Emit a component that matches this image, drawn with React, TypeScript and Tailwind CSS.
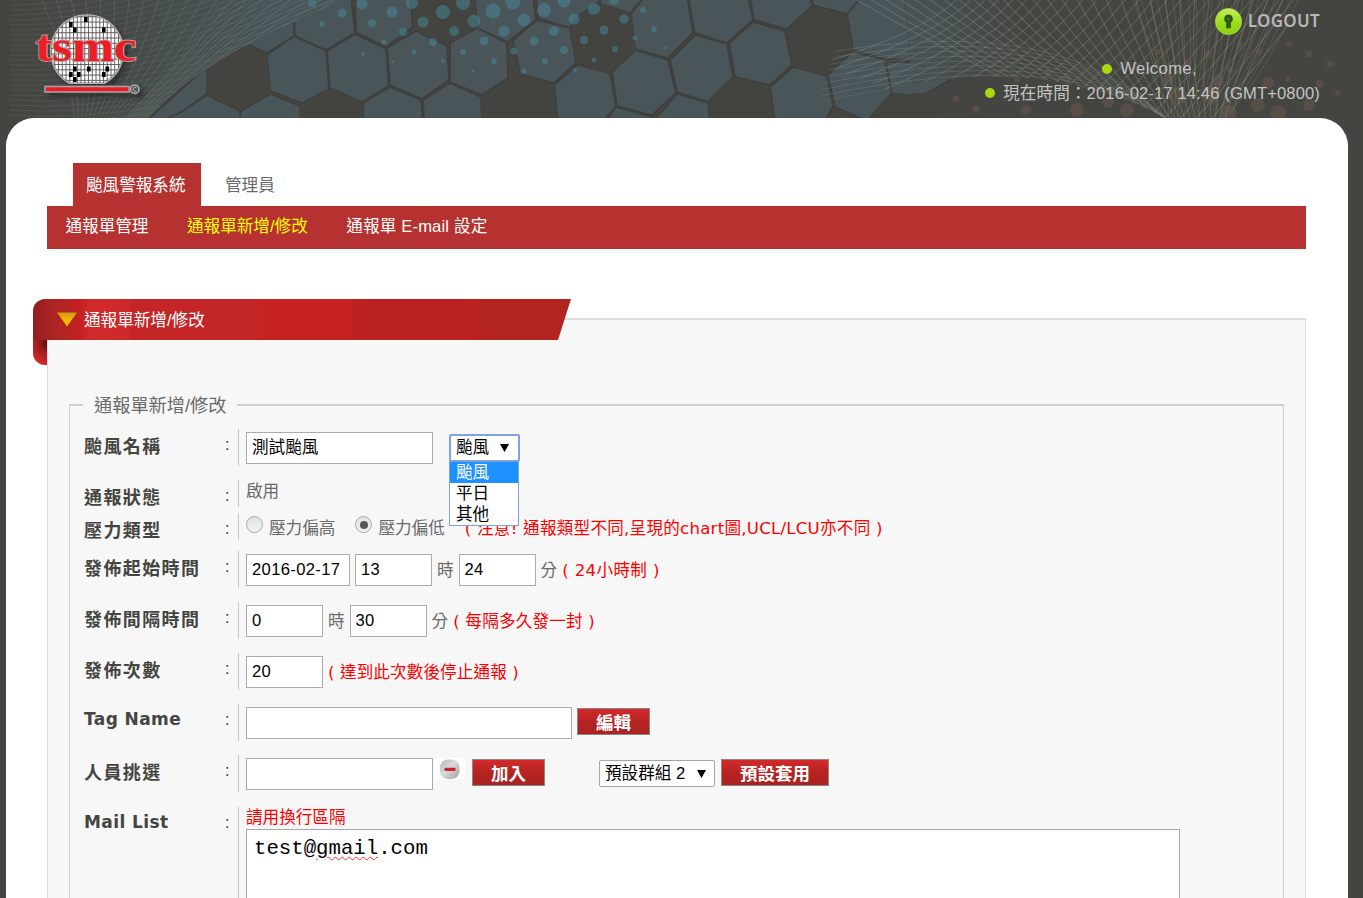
import type { ReactNode } from "react";

const SANS = "font-['Liberation_Sans','Noto_Sans_CJK_TC',sans-serif]";
const WIDE = "font-['DejaVu_Sans','Noto_Sans_CJK_TC',sans-serif]";

const LIGHT_CELLS = [
  "267,55 294,36 326,51 329,89 302,103 270,91",
  "327,51 355,34 386,49 389,86 362,102 330,88",
  "387,48 416,31 447,46 449,80 422,99 390,85",
  "293,-4 351,-4 355,33 326,50 295,36",
  "355,-4 410,-4 413,27 386,47 356,32",
  "236,39 234,-4 293,-4 294,36 267,53",
  "450,43 477,28 507,43 508,78 482,95 450,82",
  "537,20 570,28 576,63 554,83 520,74 513,40",
  "475,-4 533,-4 536,20 508,42 477,28",
  "536,-4 605,-4 597,3 580,15 570,28 538,18",
  "600,-4 645,-4 630,13 600,4",
  "645,-4 687,-4 693,33 668,58 635,49 631,14",
  "688,-4 748,-4 753,20 727,43 695,33",
  "695,35 727,44 733,77 708,102 677,92 670,60",
  "635,50 668,60 676,93 652,115 617,106 612,72",
  "577,65 610,73 616,107 603,121 558,121 554,85",
  "753,22 785,31 792,65 770,85 735,77 729,43",
  "750,-4 810,-4 812,6 787,29 754,20",
  "770,87 793,67 827,76 833,106 825,121 775,121",
  "828,75 852,52 885,60 892,93 867,121 835,107",
  "813,5 847,14 862,-4 811,-4",
  "847,15 862,-4 905,-4 911,60 885,59 853,50",
  "677,94 708,103 710,121 654,121",
  "616,107 652,117 650,121 606,121",
  "363,103 390,87 421,100 423,121 364,121",
  "423,100 450,83 481,97 482,121 424,121",
  "241,111 270,94 300,106 300,121 240,121",
  "183,111 207,95 240,111 240,121 160,121",
  "150,118 207,66 207,94 183,111 160,122",
  "892,94 886,62 935,62 950,80 925,94 905,95",
];
const DARK_CELLS = [
  "235,40 267,53 270,92 242,110 207,92 207,62",
  "300,105 330,88 361,102 363,121 300,121",
  "413,-4 475,-4 475,28 447,44 414,27",
  "597,3 630,13 635,50 610,72 576,63 571,28 580,15",
  "520,74 552,85 558,121 482,121 482,97 508,80",
  "813,7 847,15 852,50 827,74 793,65 787,30",
  "735,78 768,87 775,121 710,121 710,102",
  "867,121 892,95 930,93 940,121",
];
const TEAL_DOTS = [
  [312, 3, 4], [342, 13, 4.5], [322, 24, 3], [362, 4, 5.5], [392, 12, 5.5], [372, 23, 4], [412, 3, 6], [403, 32, 4],
  [384, 42, 2.5], [433, 42, 4], [414, 52, 2.5], [363, 54, 2], [423, 22, 5.5], [443, 12, 7], [463, 3, 7], [474, 21, 6.5],
  [454, 31, 5], [493, 11, 7.5], [513, 2, 7.5], [524, 20, 6.5], [504, 31, 5.5], [484, 41, 4.5], [463, 52, 3], [494, 61, 3],
  [544, 10, 7], [564, 1, 6.5], [574, 19, 5.5], [554, 31, 5], [534, 41, 4.5], [514, 51, 3.5], [545, 61, 3], [524, 71, 2.5],
  [564, 50, 4], [594, 9, 6], [614, 0, 5], [604, 30, 4.5], [584, 40, 4], [624, 19, 4.5], [615, 49, 3], [594, 60, 2.5],
  [643, 10, 3], [654, 29, 3], [635, 38, 2.5], [665, 48, 1.5], [575, 70, 2], [473, 71, 1.5], [443, 61, 2], [393, 62, 1.5],
];
const RUST_DOTS = [
  [976, 109, 4], [1026, 110, 5], [1077, 110, 7], [1127, 110, 7], [1108, 102, 6], [1211, 95, 9], [1258, 105, 7], [1278, 113, 8],
  [1309, 105, 6], [1268, 83, 6], [1218, 81, 6], [1169, 79, 6], [1288, 79, 3], [1309, 54, 3.5], [1289, 44, 3], [1330, 64, 3.5],
  [1208, 54, 4], [1188, 63, 4], [1230, 70, 3.5], [1158, 52, 3], [1017, 80, 3], [1067, 79, 4], [1048, 71, 3], [1178, 96, 9],
  [1229, 113, 8], [1338, 93, 3], [1320, 84, 4], [956, 99, 3], [1240, 44, 3], [1259, 52, 3],
];

const range = (n: number) => Array.from({ length: n }, (_, i) => i);

function HeaderArt() {
  return (
    <svg className="absolute inset-0" width="1363" height="118" viewBox="0 0 1363 118">
      <defs>
        <linearGradient id="tone" x1="0" x2="1">
          <stop offset="0" stopColor="#444540" />
          <stop offset="0.35" stopColor="#454a47" />
          <stop offset="0.75" stopColor="#485357" />
          <stop offset="1" stopColor="#48565a" />
        </linearGradient>
        <linearGradient id="toneRight" x1="0" x2="1">
          <stop offset="0" stopColor="#485358" />
          <stop offset="0.3" stopColor="#444540" />
        </linearGradient>
        <clipPath id="leftMesh">
          <path d="M10 0H342Q262 36 220 60Q180 84 148 118H10Z" />
        </clipPath>
        <clipPath id="rightMesh">
          <path d="M850 -2H1300Q1268 80 1225 118H1165Q1060 62 925 82L820 102Z" />
        </clipPath>
      </defs>
      {LIGHT_CELLS.map((p) => (
        <polygon key={p} points={p} fill="#4a555a" stroke="#3f403e" strokeWidth="1.8" />
      ))}
      {DARK_CELLS.map((p) => (
        <polygon key={p} points={p} fill="#434440" />
      ))}
      <g clipPath="url(#leftMesh)" fill="none">
        <rect width="345" height="118" fill="url(#tone)" />
        {range(34).map((i) => (
          <path key={i} d={`M${10} ${i * 5 - 30}Q${150} ${i * 5.5 - 34} ${360} ${i * 7 - 150}`} stroke="#8f9484" strokeOpacity="0.2" strokeWidth="0.9" />
        ))}
        {range(26).map((i) => (
          <path key={i} d={`M${40 + i * 15} -4Q${70 + i * 9} 60 ${75 + i * 3.4} 122`} stroke="#90a5a0" strokeOpacity="0.25" strokeWidth="0.9" />
        ))}
        {range(12).map((i) => (
          <path key={i} d={`M${342 - i * 8} ${-i}Q${258 - i * 6} ${34 - i} ${220 - i * 3} ${60 - i}Q${180 - i} ${82 - i} ${148 - i * 2} 118`} stroke="#93a5a0" strokeOpacity="0.22" strokeWidth="0.9" />
        ))}
      </g>
      <g clipPath="url(#rightMesh)" fill="none">
        <path d="M905 -2H1300Q1268 80 1225 118H1165Q1060 62 925 82L912 84Z" fill="url(#toneRight)" />
        {range(30).map((i) => (
          <path key={i} d={`M${850 + i * 15} -4Q${960 + i * 10} 60 ${1110 + i * 4} 130`} stroke="#aeb09a" strokeOpacity="0.26" strokeWidth="1.1" />
        ))}
        {range(26).map((i) => (
          <path key={i} d={`M${960 + i * 14} -4Q${930 + i * 12} ${30 + i * 3} ${820 + i * 13} ${64 + i * 5}`} stroke="#a3aa98" strokeOpacity="0.26" strokeWidth="1.1" />
        ))}
        {range(22).map((i) => (
          <path key={i} d={`M${1300 - i * 8} -4Q${1265 - i * 5} 75 ${1225 - i * 3} 118`} stroke="#a5a88c" strokeOpacity="0.2" strokeWidth="1" />
        ))}
        {range(9).map((i) => (
          <path key={i} d={`M820 ${102 - i * 6}Q1060 ${50 - i * 5} 1165 118`} stroke="#94a196" strokeOpacity="0.24" strokeWidth="1" />
        ))}
      </g>
      {TEAL_DOTS.map(([x, y, r]) => (
        <circle key={`${x}-${y}`} cx={x} cy={y} r={r} fill="#46899a" fillOpacity="0.5" />
      ))}
      {RUST_DOTS.map(([x, y, r]) => (
        <circle key={`${x}-${y}`} cx={x} cy={y} r={r} fill="#85685a" fillOpacity="0.28" />
      ))}
    </svg>
  );
}

const DIES = [
  [84, 17], [69, 22], [73, 27.5], [102, 27.5], [87, 66.5], [73, 66.5], [69, 72], [77, 72], [73, 77], [105.5, 66.5], [102, 72],
];

function Logo() {
  return (
    <svg className="absolute left-[30px] top-[6px]" width="120" height="96" viewBox="30 6 120 96">
      <defs>
        <clipPath id="wafer">
          <path d="M70 83A36 36 0 1 1 104 83Z" />
        </clipPath>
        <filter id="soft" x="-20%" y="-20%" width="150%" height="150%">
          <feDropShadow dx="4" dy="4" stdDeviation="2.5" floodColor="#222" floodOpacity="0.6" />
        </filter>
      </defs>
      <g filter="url(#soft)">
        <path d="M70 83A36 36 0 1 1 104 83Z" fill="#fff" stroke="#b5b5b5" strokeWidth="2" />
        <rect x="45" y="86.5" width="84" height="5.5" fill="#ed1c24" stroke="#a5a5a5" strokeWidth="1.5" />
        <circle cx="134.7" cy="89.3" r="4.2" fill="#555" stroke="#a8a8a8" strokeWidth="1.6" />
        <path d="M136.3 87.6A2 2 0 1 0 136.3 91" fill="none" stroke="#bbb" strokeWidth="0.9" />
      </g>
      <g clipPath="url(#wafer)">
        {range(20).map((i) => (
          <path key={i} d={`M${51 + i * 3.75} 10V88`} stroke="#5a5456" strokeWidth="0.9" />
        ))}
        {range(15).map((i) => (
          <path key={i} d={`M48 ${11.5 + i * 5.3}H126`} stroke="#5a5556" strokeWidth="0.9" />
        ))}
        {DIES.map(([x, y]) => (
          <rect key={`${x}-${y}`} x={x} y={y} width="3.6" height="5" fill="#000" />
        ))}
      </g>
      <text
        x="35.5"
        y="61"
        textLength="101"
        lengthAdjust="spacingAndGlyphs"
        fontSize="44"
        fontWeight="700"
        className="font-['Liberation_Serif',serif]"
        fill="#ee1c25"
        stroke="#b09c9c"
        strokeWidth="1.8"
        paintOrder="stroke"
      >
        tsmc
      </text>
    </svg>
  );
}

function Header() {
  return (
    <header className="relative flex h-[118px] flex-col items-end pr-[43px]">
      <HeaderArt />
      <Logo />
      <a className="relative mt-2 flex h-[27px] items-center gap-[6px]">
        <svg width="27" height="27" viewBox="0 0 27 27">
          <defs>
            <linearGradient id="lime" x1="0" y1="0" x2="0" y2="1">
              <stop offset="0" stopColor="#c6f05a" />
              <stop offset="0.55" stopColor="#9bdc1c" />
              <stop offset="1" stopColor="#8ccf12" />
            </linearGradient>
          </defs>
          <circle cx="13.5" cy="13.5" r="13.1" fill="url(#lime)" stroke="#b9ee45" strokeWidth="0.6" />
          <path d="M13.5 6.6a4.3 4.3 0 0 0-2.2 8l-.3 5.7h5l-.3-5.7a4.3 4.3 0 0 0-2.2-8z" fill="#2f5a10" />
          <circle cx="13.5" cy="11" r="1.1" fill="#5f8f25" />
        </svg>
        <span className="-mt-[2px] font-['Noto_Sans',sans-serif] text-[17px] font-semibold leading-none tracking-[0.3px] text-[#b9b7bb]">LOGOUT</span>
      </a>
      <div className={`relative mt-[22px] mr-[123px] flex h-[25px] items-center gap-[8px] text-[16.6px] text-[#c3c3c3] ${SANS}`}>
        <i className="-mt-[2px] size-[10px] rounded-full bg-[#a9d811]" />
        <span className="tracking-[0.4px]">Welcome,</span>
      </div>
      <div className={`relative flex h-[25px] items-center gap-[8px] text-[16.6px] text-[#c3c3c3] ${SANS}`}>
        <i className="-mt-[3px] size-[10px] rounded-full bg-[#a9d811]" />
        <span className="whitespace-nowrap tracking-[0.12px]">現在時間：2016-02-17 14:46 (GMT+0800)</span>
      </div>
    </header>
  );
}

function Row({ label, latin, className, children }: { label: string; latin?: boolean; className: string; children: ReactNode }) {
  return (
    <div className={`flex ${className}`}>
      {latin ? (
        <div className="w-[139px] whitespace-nowrap font-['DejaVu_Sans',sans-serif] text-[17px] font-bold leading-[31px] tracking-[0.4px] text-[#444540]">
          {label}
        </div>
      ) : (
        <div className="w-[139px] whitespace-nowrap font-['Noto_Sans_CJK_TC',sans-serif] text-[18px] font-bold leading-[33px] tracking-[1.4px] text-[#444540]">
          {label}
        </div>
      )}
      <div className="w-[15px] pl-[2px] text-[16px] leading-[32px] text-[#333]">:</div>
      <div className="flex flex-1 items-start border-l border-[#c9c9c9] pl-[7px]">{children}</div>
    </div>
  );
}

function Field({ value, className }: { value?: string; className: string }) {
  return (
    <div className={`mt-[3px] flex h-8 items-center border-[1.5px] border-[#ababab] bg-white pl-[5px] pt-px text-[16.6px] text-black ${className}`}>
      {value}
    </div>
  );
}

function Unit({ children }: { children: ReactNode }) {
  return <span className="mx-[5px] mt-[3px] leading-[34px]">{children}</span>;
}

function Note({ children, className = "" }: { children: ReactNode; className?: string }) {
  return <span className={`whitespace-pre text-[16.6px] text-[#fe0000] ${WIDE} ${className}`}>{children}</span>;
}

function RedButton({ children, className }: { children: ReactNode; className: string }) {
  return (
    <button
      className={`mt-[4px] flex h-[27px] items-center justify-center border-[1.5px] border-[#8f8686] bg-linear-to-b from-[#d22b2b] via-[#b52322] to-[#a92322] pt-[3px] text-[17.5px] font-bold text-white ${className}`}
    >
      {children}
    </button>
  );
}

function Caret() {
  return (
    <svg className="-mt-[2px]" width="9" height="8" viewBox="0 0 9 8">
      <path d="M0 0H9L4.5 8Z" fill="#000" />
    </svg>
  );
}

function Radio({ checked }: { checked?: boolean }) {
  return (
    <span className="mt-[3px] mr-[6px] flex size-[17px] items-center justify-center rounded-full border border-[#aaa] bg-linear-to-b from-[#e2e2e2] to-[#f1f1f1]">
      {checked && <i className="size-[8px] rounded-full bg-[#555]" />}
    </span>
  );
}

function KindSelect() {
  return (
    <div className="relative ml-[16px] mt-[5px] text-[16.6px] text-black">
      <div className="flex h-[28px] w-[71px] items-center justify-between rounded-[2px] border-2 border-[#7ea1e8] bg-white pl-[5px] pr-[9px] pt-px">
        颱風
        <Caret />
      </div>
      <div className="absolute left-0 top-[27px] z-10 w-[70px] border border-[#7fa3c9] bg-white">
        <div className="h-[21px] bg-[#1e90ff] pl-[6px] leading-[22px] text-white">颱風</div>
        <div className="h-[21px] pl-[6px] leading-[21px]">平日</div>
        <div className="h-[21px] pl-[6px] leading-[21px]">其他</div>
      </div>
    </div>
  );
}

function MinusIcon() {
  return (
    <span className="ml-[1px] mt-[3px] flex h-[22px] w-[31px] items-start justify-center bg-white">
      <svg width="22" height="22" viewBox="0 0 22 22">
        <defs>
          <linearGradient id="steel" x1="0" y1="0" x2="1" y2="1">
            <stop offset="0" stopColor="#b2b2b2" />
            <stop offset="0.45" stopColor="#dcdcdc" />
            <stop offset="1" stopColor="#9f9f9f" />
          </linearGradient>
        </defs>
        <rect x="1" y="1.5" width="19.5" height="19.5" rx="8" fill="url(#steel)" />
        <rect x="5.5" y="9.8" width="11" height="3.2" rx="0.8" fill="#c9232c" />
      </svg>
    </span>
  );
}

export default function App() {
  return (
    <div className={`h-[898px] w-[1363px] overflow-hidden bg-[#444540] text-[16.6px] text-[#6a6a6a] ${SANS}`}>
      <Header />
      <main className="ml-[6px] h-[780px] w-[1342px] rounded-t-[28px] bg-white pl-[41px] pr-[42px] pt-[45px]">
        <div className="ml-[26px] flex h-[43px] leading-[45px]">
          <div className="w-[128px] whitespace-nowrap bg-[#b53230] pl-[13px] text-white">颱風警報系統</div>
          <div className="pl-[24px]">管理員</div>
        </div>
        <nav className="flex h-[43px] gap-[38.5px] whitespace-nowrap bg-[#b53230] pl-[18.5px] leading-[42px] text-white">
          <span>通報單管理</span>
          <span className="text-[#ffff00]">通報單新增/修改</span>
          <span className="tracking-[0.15px]">通報單 E-mail 設定</span>
        </nav>

        <section className="mt-[50px]">
          <div className="relative z-10 -ml-[14px] h-[41px] w-[538px]">
            <div className="absolute left-0 top-[30px] h-[36px] w-[14px] rounded-bl-[12px] bg-[radial-gradient(circle_at_100%_14px,#6e1010_2px,#9e1d1d_9px,#d02828_20px)]" />
            <div className="relative flex h-[41px] items-center gap-[7px] rounded-tl-[12px] bg-[linear-gradient(90deg,#961e1f_0px,#b02424_24px,#b52421_37px,#c42020_46px,#d02a2a_58px,#cd2829_97px,#c42628_98px,#c42628_229px,#c62320_230px,#c62320_319px,#bb2120_320px,#bb2120_446px,#b32420_447px)] pl-[24px] text-white [clip-path:polygon(0_0,100%_0,525px_100%,0_100%)]">
              <svg width="20" height="15" viewBox="0 0 20 15">
                <defs>
                  <linearGradient id="gold" x1="0" y1="0" x2="0" y2="1">
                    <stop offset="0" stopColor="#c79c10" />
                    <stop offset="0.6" stopColor="#ffb800" />
                  </linearGradient>
                </defs>
                <path d="M0 0.5H20L10 14.5Z" fill="url(#gold)" />
              </svg>
              <span className="pt-[4px]">通報單新增/修改</span>
            </div>
          </div>

          <div className="-mt-[22px] h-[640px] border border-t-2 border-[#dcdcdc] bg-[#f7f7f7] pl-[21px] pr-[21px] pt-[73px]">
            <fieldset className="h-[560px] border border-t-2 border-[#d0d0d0] pl-[14px]">
              <legend className="-ml-px h-[24px] px-[11px] text-[18.2px] leading-[26px]">通報單新增/修改</legend>

              <Row label="颱風名稱" className="mb-[14px] mt-[12px] h-[37px]">
                <Field value="測試颱風" className="w-[187px]" />
                <KindSelect />
              </Row>
              <Row label="通報狀態" className="mb-[6px] h-[27px]">
                <span className="leading-[23px]">啟用</span>
              </Row>
              <Row label="壓力類型" className="mb-[11px] h-[27px]">
                <Radio />
                <span className="leading-[31px]">壓力偏高</span>
                <span className="w-[20px]" />
                <Radio checked />
                <span className="leading-[31px]">壓力偏低</span>
                <Note className="ml-[20px] leading-[31px] tracking-[0.24px]">( 注意! 通報類型不同,呈現的chart圖,UCL/LCU亦不同 )</Note>
              </Row>
              <Row label="發佈起始時間" className="mb-[14px] h-[37px]">
                <Field value="2016-02-17" className="mr-[5px] w-[104px] tracking-[0.35px]" />
                <Field value="13" className="w-[77px] tracking-[0.3px]" />
                <Unit>時</Unit>
                <Field value="24" className="w-[77px] tracking-[0.3px]" />
                <Unit>分</Unit>
                <Note className="mt-[3px] leading-[34px] tracking-[0.35px]">( 24小時制 )</Note>
              </Row>
              <Row label="發佈間隔時間" className="mb-[14px] h-[37px]">
                <Field value="0" className="w-[77px]" />
                <Unit>時</Unit>
                <Field value="30" className="w-[77px] tracking-[0.3px]" />
                <Unit>分</Unit>
                <Note className="mt-[3px] leading-[34px] tracking-[0.2px]">( 每隔多久發一封 )</Note>
              </Row>
              <Row label="發佈次數" className="mb-[14px] h-[37px]">
                <Field value="20" className="mr-[5px] w-[77px] tracking-[0.3px]" />
                <Note className="mt-[3px] leading-[34px] tracking-[0.1px]">( 達到此次數後停止通報 )</Note>
              </Row>
              <Row label="Tag Name" latin className="mb-[14px] h-[37px]">
                <Field className="mr-[5px] w-[326px]" />
                <RedButton className="w-[73px]">編輯</RedButton>
              </Row>
              <Row label="人員挑選" className="mb-[15px] h-[37px]">
                <Field className="w-[187px]" />
                <MinusIcon />
                <RedButton className="ml-[7px] w-[73px]">加入</RedButton>
                <div className="ml-[54px] mr-[6px] mt-[5px] flex h-[27px] w-[116px] items-center justify-between rounded-[2px] border border-[#a6a6a6] bg-white pl-[5px] pr-[8px] pt-[2px] text-black">
                  預設群組 2
                  <Caret />
                </div>
                <RedButton className="w-[108px]">預設套用</RedButton>
              </Row>
              <Row label="Mail List" latin className="h-[200px]">
                <div className="flex flex-col">
                  <Note className="h-[22px] leading-[22px]">請用換行區隔</Note>
                  <div className="h-[170px] w-[934px] border-[1.5px] border-[#a9a9a9] bg-white pl-[7px] pt-[5px] font-['Liberation_Mono',monospace] text-[20.7px] leading-[28px] text-black">
                    test@
                    <span className="underline decoration-[#f33] decoration-wavy decoration-1 underline-offset-[2px]">gmail</span>
                    .com
                  </div>
                </div>
              </Row>
            </fieldset>
          </div>
        </section>
      </main>
    </div>
  );
}
